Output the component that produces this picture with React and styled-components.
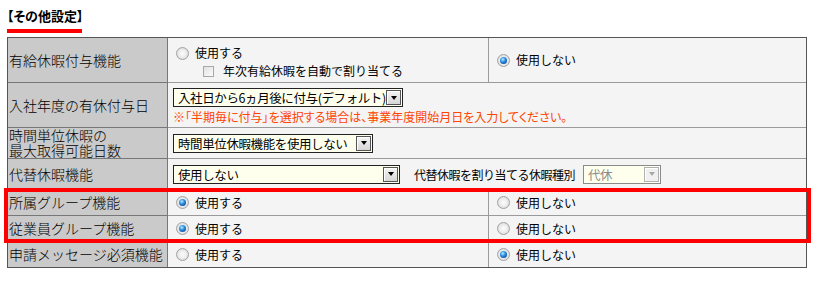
import React from 'react';
import styled, { createGlobalStyle, css } from 'styled-components';

const Global = createGlobalStyle`
  html, body { margin: 0; padding: 0; background: #fff; }
  body { font-family: "Noto Sans CJK JP", "Noto Sans", sans-serif; color: #111; }
`;

const Page = styled.div`
  padding: 8px 0 0 7px;
  width: 800px;
`;

const Title = styled.h2`
  margin: 0;
  font-size: 13px;
  font-weight: 700;
  line-height: 16px;
  font-feature-settings: "palt";
  color: #000;
`;

const TitleBar = styled.div`
  width: 75px;
  height: 4px;
  background: #f00;
  margin: 5px 0 4px;
`;

const Table = styled.div`
  width: 800px;
  box-sizing: border-box;
  border: 1px solid #555;
  background: #f4f4f4;
`;

const Row = styled.div`
  display: grid;
  grid-template-columns: ${p => (p.$split ? '160px 320px 1fr' : '160px 1fr')};
  grid-template-rows: ${p => p.$h}px;
  & > * {
    box-sizing: border-box;
    border-top: ${p => (p.$first ? 'none' : '1px solid #9a9a9a')};
  }
  & > *:first-child {
    border-top-color: #777;
  }
`;

const Label = styled.div`
  background: #cacaca;
  border-right: 1px solid #777;
  padding: 0 1px;
  font-size: 14px;
  font-weight: 300;
  line-height: 15px;
  display: flex;
  flex-direction: column;
  justify-content: center;
  color: #000;
  white-space: nowrap;
`;

const Value = styled.div`
  display: flex;
  flex-direction: ${p => (p.$inline ? 'row' : 'column')};
  justify-content: ${p => (p.$top || p.$inline ? 'flex-start' : 'center')};
  align-items: ${p => (p.$inline ? 'center' : 'flex-start')};
  padding: ${p => p.$pad || '0 8px'};
  font-size: 12px;
  color: #000;
  & + & {
    border-left: 1px solid #9a9a9a;
  }
`;

const ChoiceLine = styled.label`
  display: flex;
  align-items: center;
  gap: 6px;
  height: 18px;
  line-height: 18px;
  white-space: nowrap;
  margin-left: ${p => p.$indent || 0}px;
`;

const Radio = styled.span`
  position: relative;
  flex: none;
  width: 13px;
  height: 13px;
  box-sizing: border-box;
  border-radius: 50%;
  border: 1px solid #a2a2a2;
  background: radial-gradient(circle at 50% 50%, #fdfdfd 0%, #eeeeee 45%, #cfcfcf 100%);
  ${p =>
    p.$checked &&
    css`
      &::after {
        content: '';
        position: absolute;
        left: 2px;
        top: 2px;
        width: 7px;
        height: 7px;
        border-radius: 50%;
        background: radial-gradient(circle at 40% 35%, #bfefff 0%, #3a9ae6 35%, #0d5bb5 70%, #063a7a 100%);
      }
    `}
`;

const Check = styled.span`
  flex: none;
  width: 11px;
  height: 11px;
  box-sizing: border-box;
  border: 1px solid #a8a8a8;
  background: linear-gradient(135deg, #e2e2e2, #fbfbfb);
  margin-right: 3px;
`;

const SelectBox = styled.div`
  display: inline-flex;
  align-items: center;
  flex: none;
  box-sizing: border-box;
  height: 19px;
  width: ${p => p.$w}px;
  border: 1px solid ${p => (p.$disabled ? '#8a8a8a' : '#222')};
  background: #ffffee;
`;

const SelectText = styled.span`
  flex: 1;
  padding-left: 4px;
  font-size: 12.5px;
  letter-spacing: -0.4px;
  line-height: 17px;
  color: ${p => (p.$disabled ? '#8a8a8a' : '#000')};
  white-space: nowrap;
  overflow: hidden;
`;

const SelectButton = styled.span`
  flex: none;
  width: 15px;
  height: 15px;
  margin-right: 1px;
  box-sizing: border-box;
  border: 1px solid ${p => (p.$disabled ? '#b0b0b0' : '#555')};
  background: ${p => (p.$disabled ? '#f0f0f0' : 'linear-gradient(#f4f4f4, #d6d6d6)')};
  box-shadow: inset 1px 1px #fff;
  display: flex;
  align-items: center;
  justify-content: center;
  &::after {
    content: '';
    border-left: 3.5px solid transparent;
    border-right: 3.5px solid transparent;
    border-top: 4px solid ${p => (p.$disabled ? '#a8a8a8' : '#000')};
  }
`;

const Note = styled.div`
  margin-top: 3px;
  font-size: 12px;
  line-height: 14px;
  color: #ff4400;
  font-feature-settings: "palt";
  white-space: nowrap;
`;

const InlineText = styled.span`
  margin: 0 8px 0 14px;
  font-size: 12px;
  letter-spacing: -0.5px;
  white-space: nowrap;
`;

const Highlight = styled.div`
  position: relative;
  &::after {
    content: '';
    position: absolute;
    top: -1px;
    bottom: -2px;
    left: -4px;
    right: -5px;
    border: 4px solid #f00;
    pointer-events: none;
    z-index: 1;
  }
`;

const Select = ({ w, disabled, children }) => (
  <SelectBox $w={w} $disabled={disabled}>
    <SelectText $disabled={disabled}>{children}</SelectText>
    <SelectButton $disabled={disabled} />
  </SelectBox>
);

const Choice = ({ checked, children }) => (
  <ChoiceLine>
    <Radio $checked={checked} />
    {children}
  </ChoiceLine>
);

const YesNoRow = ({ label, yes }) => (
  <Row $split $h={26}>
    <Label>{label}</Label>
    <Value>
      <Choice checked={yes}>使用する</Choice>
    </Value>
    <Value>
      <Choice checked={!yes}>使用しない</Choice>
    </Value>
  </Row>
);

export default function App() {
  return (
    <Page>
      <Global />
      <Title>【その他設定】</Title>
      <TitleBar />
      <Table>
        <Row $split $first $h={44}>
          <Label>有給休暇付与機能</Label>
          <Value $top $pad="6px 8px 0">
            <Choice>使用する</Choice>
            <ChoiceLine $indent={27}>
              <Check />
              年次有給休暇を自動で割り当てる
            </ChoiceLine>
          </Value>
          <Value>
            <Choice checked>使用しない</Choice>
          </Value>
        </Row>
        <Row $h={45}>
          <Label>入社年度の有休付与日</Label>
          <Value $top $pad="5px 5px 0">
            <Select w={230}>入社日から6ヵ月後に付与(デフォルト)</Select>
            <Note>※「半期毎に付与」を選択する場合は、事業年度開始月日を入力してください。</Note>
          </Value>
        </Row>
        <Row $h={31}>
          <Label>
            <span>時間単位休暇の</span>
            <span>最大取得可能日数</span>
          </Label>
          <Value $pad="0 5px">
            <Select w={200}>時間単位休暇機能を使用しない</Select>
          </Value>
        </Row>
        <Row $h={31}>
          <Label>代替休暇機能</Label>
          <Value $inline $pad="0 5px">
            <Select w={227}>使用しない</Select>
            <InlineText>代替休暇を割り当てる休暇種別</InlineText>
            <Select w={78} disabled>代休</Select>
          </Value>
        </Row>
        <Highlight>
          <YesNoRow label="所属グループ機能" yes />
          <YesNoRow label="従業員グループ機能" yes />
        </Highlight>
        <YesNoRow label="申請メッセージ必須機能" yes={false} />
      </Table>
    </Page>
  );
}
